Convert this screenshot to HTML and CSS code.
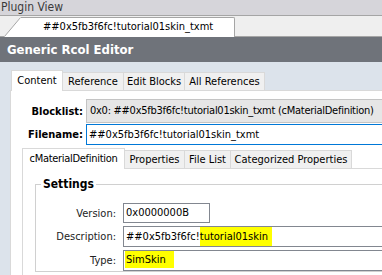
FILE: index.html
```html
<!DOCTYPE html>
<html>
<head>
<meta charset="utf-8">
<link rel="stylesheet" href="styles.css">
</head>
<body>
<div class="app">
  <div class="titlebar">Plugin View</div>
  <div class="docstrip">
    <div class="doctab">
      <svg class="slant" width="17" height="20" viewBox="0 0 17 20"><polygon points="0,20 16.5,0 17,0 17,20" fill="#fff"/><line x1="0.5" y1="19.5" x2="16.5" y2="0.5" stroke="#a5a5a5" stroke-width="1"/></svg>
      ##0x5fb3f6fc!tutorial01skin_txmt
    </div>
  </div>
  <div class="header">Generic Rcol Editor</div>
  <div class="main">
    <div class="tabs outer-tabs">
      <div class="tab sel w-content">Content</div>
      <div class="tab w-ref">Reference</div>
      <div class="tab w-edit">Edit Blocks</div>
      <div class="tab w-all">All References</div>
    </div>
    <div class="page">
      <div class="fields">
        <div class="blabel">Blocklist:</div>
        <div class="combo">0x0: ##0x5fb3f6fc!tutorial01skin_txmt (cMaterialDefinition)</div>
        <div class="blabel">Filename:</div>
        <div class="input focus">##0x5fb3f6fc!tutorial01skin_txmt</div>
      </div>
      <div class="inner">
        <div class="tabs inner-tabs">
          <div class="tab sel w-cmat">cMaterialDefinition</div>
          <div class="tab w-prop">Properties</div>
          <div class="tab w-file">File List</div>
          <div class="tab w-cat">Categorized Properties</div>
        </div>
        <div class="ipage">
          <fieldset class="group">
            <legend>Settings</legend>
            <div class="rows">
              <div class="label">Version:</div>
              <div class="box short">0x0000000B</div>
              <div class="label">Description:</div>
              <div class="box">##0x5fb3f6fc!<span class="hl">tutorial01skin</span></div>
              <div class="label">Type:</div>
              <div class="box"><span class="hl hl2">SimSkin</span></div>
            </div>
          </fieldset>
        </div>
      </div>
    </div>
  </div>
</div>
</body>
</html>
```
FILE: styles.css
```css
* { box-sizing: border-box; }
html, body { margin: 0; padding: 0; }
body {
  width: 382px;
  height: 275px;
  overflow: hidden;
  font-family: "DejaVu Sans Condensed", "DejaVu Sans", sans-serif;
  font-stretch: condensed;
  font-size: 11px;
  color: #000;
  background: #dce3eb;
}
.app { width: 382px; height: 275px; overflow: hidden; }

.titlebar {
  height: 15px;
  background: #d6d5da;
  color: #3a3a3a;
  font-size: 12px;
  line-height: 14px;
  padding-left: 1px;
}

.docstrip {
  height: 22px;
  background: #efefef;
  border-top: 1px solid #a5a5a5;
  border-bottom: 1px solid #a5a5a5;
  display: flex;
  align-items: flex-end;
}
.doctab {
  position: relative;
  margin-left: 21px;
  margin-bottom: -1px;
  width: 214px;
  height: 20px;
  background: #fff;
  border-top: 1px solid #a5a5a5;
  border-right: 1px solid #a5a5a5;
  border-top-right-radius: 2px;
  padding-left: 22px;
  line-height: 18px;
  white-space: nowrap;
}
.slant { position: absolute; left: -17px; top: -1px; display: block; }

.header {
  height: 25px;
  background: #6f737a;
  color: #fff;
  font-weight: bold;
  font-size: 13px;
  line-height: 25px;
  padding-left: 7px;
}

.main {
  padding: 8px 0 0 10px;
}

.tabs { display: flex; align-items: flex-end; height: 20px; }
.outer-tabs { margin-left: 1px; }
.tab {
  height: 18px;
  background: #f0f0f0;
  border: 1px solid #d9d9d9;
  border-bottom: none;
  margin-left: -1px;
  text-align: center;
  line-height: 17px;
  white-space: nowrap;
  color: #000;
}
.tab:first-child { margin-left: 0; }
.tab.sel {
  height: 21px;
  margin-bottom: -1px;
  background: #fff;
  position: relative;
  z-index: 1;
  line-height: 19px;
}
.w-content { width: 52px; }
.w-ref { width: 62px; }
.w-edit { width: 62px; }
.w-all { width: 81px; }
.w-cmat { width: 103px; letter-spacing: -0.3px; }
.w-prop { width: 61px; }
.w-file { width: 47px; }
.w-cat { width: 122px; }

.page {
  width: 420px;
  height: 200px;
  background: #fff;
  border: 1px solid #d9d9d9;
  padding: 8px 0 0 0;
}

.fields {
  display: grid;
  grid-template-columns: 72px 1fr;
  grid-template-rows: 24px 21px;
  column-gap: 3px;
  row-gap: 1px;
}
.blabel {
  font-weight: bold;
  text-align: right;
  align-self: center;
  white-space: nowrap;
}
.combo {
  background: #e6e6e6;
  border: 1px solid #c4c4c4;
  padding-left: 3px;
  line-height: 22px;
  white-space: nowrap;
  overflow: hidden;
  letter-spacing: -0.27px;
}
.input {
  background: #fff;
  border: 1px solid #0078d7;
  padding-left: 2px;
  line-height: 19px;
  white-space: nowrap;
}

.inner { margin: 3px 0 0 11px; }

.ipage {
  background: #fff;
  border: 1px solid #d9d9d9;
  height: 120px;
  padding: 0 0 0 12px;
}

.group {
  margin: 9px 0 0 0;
  padding: 12px 0 0 0;
  border: 1px solid #d0d0d0;
  min-width: 0;
}
.group legend {
  margin-left: 5px;
  padding: 0 2px;
  font-weight: bold;
  font-size: 12px;
  line-height: 13px;
}

.rows {
  display: grid;
  grid-template-columns: 80px 1fr;
  grid-template-rows: 20px 21px 21px;
  column-gap: 7px;
  row-gap: 3px;
}
.label {
  text-align: right;
  align-self: center;
  color: #222;
  white-space: nowrap;
}
.box {
  border: 1px solid #828790;
  background: #fff;
  padding-left: 2px;
  line-height: 18px;
  white-space: nowrap;
}
.box.short { width: 87px; }
.hl {
  background: #ffff00;
  display: inline-block;
  line-height: 19px;
  padding-right: 4px;
}
.hl2 { margin-left: -1px; padding-left: 1px; padding-right: 8px; line-height: 17px; }
```
